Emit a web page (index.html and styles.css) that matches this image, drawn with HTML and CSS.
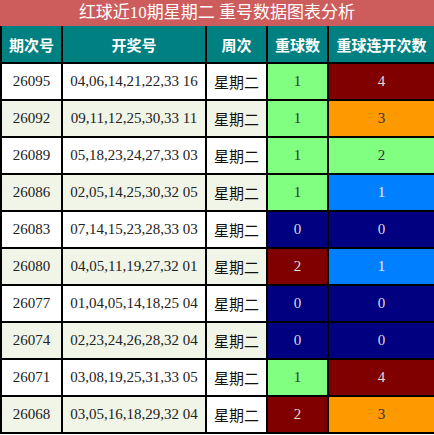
FILE: index.html
```html
<!DOCTYPE html>
<html>
<head>
<meta charset="utf-8">
<link rel="stylesheet" href="styles.css">
</head>
<body>
<div class="wrap">
<div class="title">红球近10期星期二 重号数据图表分析</div>
<table class="grid">
<colgroup><col class="c1"><col class="c2"><col class="c3"><col class="c4"><col class="c5"></colgroup>
<thead>
<tr><th>期次号</th><th>开奖号</th><th>周次</th><th>重球数</th><th>重球连开次数</th></tr>
</thead>
<tbody>
<tr><td class="num">26095</td><td class="num">04,06,14,21,22,33 16</td><td class="wk">星期二</td><td class="num g">1</td><td class="num r">4</td></tr>
<tr class="alt"><td class="num">26092</td><td class="num">09,11,12,25,30,33 11</td><td class="wk">星期二</td><td class="num g">1</td><td class="num o">3</td></tr>
<tr><td class="num">26089</td><td class="num">05,18,23,24,27,33 03</td><td class="wk">星期二</td><td class="num g">1</td><td class="num g">2</td></tr>
<tr class="alt"><td class="num">26086</td><td class="num">02,05,14,25,30,32 05</td><td class="wk">星期二</td><td class="num g">1</td><td class="num b">1</td></tr>
<tr><td class="num">26083</td><td class="num">07,14,15,23,28,33 03</td><td class="wk">星期二</td><td class="num n">0</td><td class="num n">0</td></tr>
<tr class="alt"><td class="num">26080</td><td class="num">04,05,11,19,27,32 01</td><td class="wk">星期二</td><td class="num r">2</td><td class="num b">1</td></tr>
<tr><td class="num">26077</td><td class="num">01,04,05,14,18,25 04</td><td class="wk">星期二</td><td class="num n">0</td><td class="num n">0</td></tr>
<tr class="alt"><td class="num">26074</td><td class="num">02,23,24,26,28,32 04</td><td class="wk">星期二</td><td class="num n">0</td><td class="num n">0</td></tr>
<tr><td class="num">26071</td><td class="num">03,08,19,25,31,33 05</td><td class="wk">星期二</td><td class="num g">1</td><td class="num r">4</td></tr>
<tr class="alt last"><td class="num">26068</td><td class="num">03,05,16,18,29,32 04</td><td class="wk">星期二</td><td class="num r">2</td><td class="num o">3</td></tr>
</tbody>
</table>
</div>
</body>
</html>
```
FILE: styles.css
```css
html, body {
  margin: 0;
  padding: 0;
  background: #ffffff;
}
.wrap {
  width: 434px;
}
.title {
  height: 26px;
  line-height: 26px;
  background: #cd5c5c;
  color: #ffffff;
  text-align: center;
  font-family: "Liberation Serif", "Noto Sans CJK SC", serif;
  font-size: 17px;
  box-sizing: border-box;
}
.grid {
  width: 434px;
  border-collapse: collapse;
  table-layout: fixed;
}
.c1 { width: 61px; }
.c2 { width: 144px; }
.c3 { width: 61px; }
.c4 { width: 61px; }
.c5 { width: 107px; }
.grid th {
  height: 36px;
  background: #008080;
  color: #ffffff;
  font-family: "Noto Sans CJK SC", sans-serif;
  font-weight: bold;
  font-size: 15px;
  border: 2px solid #000000;
  border-top: none;
  padding: 0;
  text-align: center;
}
.grid td {
  height: 35px;
  border: 2px solid #000000;
  padding: 0;
  text-align: center;
  color: #222222;
  background: #ffffff;
}
.grid td.num {
  font-family: "Liberation Serif", serif;
  font-size: 15px;
}
.grid td.wk {
  font-family: "Noto Sans CJK SC", sans-serif;
  font-size: 15px;
  color: #111111;
}
.grid tr.alt td {
  background: #f0f5e8;
}
.grid tr.last td.wk {
  background: #ffffff;
}
.grid td.g { background: #80ff80; color: #333333; }
.grid tr.alt td.g { background: #80ff80; }
.grid td.r { background: #800000; color: #dddddd; }
.grid tr.alt td.r { background: #800000; }
.grid td.o { background: #ff9900; color: #333333; }
.grid tr.alt td.o { background: #ff9900; }
.grid td.b { background: #0080ff; color: #eeeeee; }
.grid tr.alt td.b { background: #0080ff; }
.grid td.n { background: #000080; color: #dddddd; }
.grid tr.alt td.n { background: #000080; }
```
